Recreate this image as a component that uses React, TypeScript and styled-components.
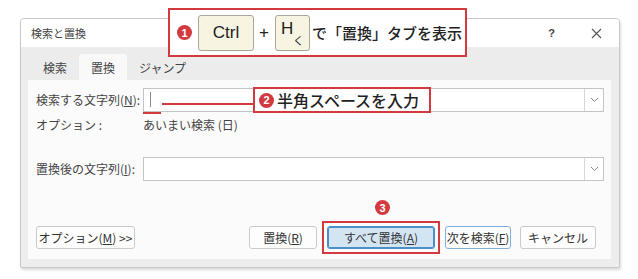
import styled, { createGlobalStyle } from 'styled-components';

const GlobalStyle = createGlobalStyle`
  html, body {
    margin: 0;
    padding: 0;
    background: #ffffff;
  }
  body {
    font-family: 'Noto Sans CJK JP', 'Noto Sans', sans-serif;
    color: #333333;
  }
`;

const Chevron = () => (
  <svg width="9" height="6" viewBox="0 0 9 6">
    <path d="M1 1 L4.5 4.5 L8 1" fill="none" stroke="#8a8a8a" strokeWidth="1" />
  </svg>
);

const CloseIcon = () => (
  <svg width="11" height="11" viewBox="0 0 11 11">
    <path d="M1 1 L10 10 M10 1 L1 10" stroke="#555" strokeWidth="1.1" />
  </svg>
);

const App = () => {
  return (
    <Page>
      <GlobalStyle />
      <Dialog>
        <TitleBar>
          <Title>検索と置換</Title>
          <TitleActions>
            <HelpMark>?</HelpMark>
            <CloseIcon />
          </TitleActions>
        </TitleBar>
        <TabStrip>
          <Tab>検索</Tab>
          <Tab active>置換</Tab>
          <Tab>ジャンプ</Tab>
        </TabStrip>
        <Panel>
          <FieldRow>
            <Label>
              検索する文字列(<u>N</u>):
            </Label>
            <Combo>
              <ComboText>
                <Caret />
                <CaretMark />
              </ComboText>
              <ComboButton>
                <Chevron />
              </ComboButton>
            </Combo>
          </FieldRow>
          <OptionRow>
            <Label>オプション :</Label>
            <span>あいまい検索 (日)</span>
          </OptionRow>
          <FieldRow>
            <Label>
              置換後の文字列(<u>I</u>):
            </Label>
            <Combo>
              <ComboText />
              <ComboButton>
                <Chevron />
              </ComboButton>
            </Combo>
          </FieldRow>
          <ButtonRow>
            <Button width={99}>
              オプション(<u>M</u>) &gt;&gt;
            </Button>
            <Spacer />
            <Button width={68}>
              置換(<u>R</u>)
            </Button>
            <Highlight>
              <StepNumber small>3</StepNumber>
              <Button width={108} variant="primary">
                すべて置換(<u>A</u>)
              </Button>
            </Highlight>
            <Button width={66} variant="focus">
              次を検索(<u>F</u>)
            </Button>
            <Button width={76}>キャンセル</Button>
          </ButtonRow>
        </Panel>
      </Dialog>

      <KeyCallout>
        <StepNumber>1</StepNumber>
        <Key width={56}>Ctrl</Key>
        <Plus>+</Plus>
        <Key width={35} align="flex-start">
          H<KeySub>く</KeySub>
        </Key>
        <CalloutText>で「置換」タブを表示</CalloutText>
      </KeyCallout>

      <SpaceCallout>
        <StepNumber>2</StepNumber>
        <CalloutText size={16}>半角スペースを入力</CalloutText>
      </SpaceCallout>
    </Page>
  );
};

const Page = styled.div`
  position: relative;
  width: 638px;
  height: 279px;
  padding: 18px 0 0 20px;
  box-sizing: border-box;
`;

const Dialog = styled.div`
  width: 600px;
  height: 250px;
  box-sizing: border-box;
  border: 1px solid #c9c9c9;
  border-radius: 4px 4px 2px 2px;
  background: #ededed;
  box-shadow: 1px 2px 3px rgba(0, 0, 0, 0.15);
  display: flex;
  flex-direction: column;
  overflow: hidden;
`;

const TitleBar = styled.div`
  height: 28px;
  background: #ffffff;
  display: flex;
  align-items: center;
  justify-content: space-between;
  padding: 0 17px 0 10px;
`;

const Title = styled.span`
  font-size: 11px;
  color: #444;
`;

const TitleActions = styled.div`
  display: flex;
  align-items: center;
  gap: 36px;
`;

const HelpMark = styled.span`
  font-family: 'Liberation Sans', sans-serif;
  font-size: 11px;
  font-weight: bold;
  color: #444;
`;

const TabStrip = styled.div`
  height: 33px;
  display: flex;
  align-items: flex-end;
  padding-left: 10px;
  background: #ececec;
`;

const Tab = styled.div<{ active?: boolean }>`
  height: 26px;
  padding: 0 12px;
  display: flex;
  align-items: center;
  font-size: 12px;
  color: #444;
  background: ${({ active }) => (active ? '#f9f9f9' : 'transparent')};
  border-radius: 3px 3px 0 0;
`;

const Panel = styled.div`
  flex: 1;
  margin: 0 8px 8px 7px;
  background: #fbfbfb;
  padding: 8px 7px 10px 8px;
  display: flex;
  flex-direction: column;
  font-size: 12px;
`;

const FieldRow = styled.div`
  display: flex;
  align-items: center;
  height: 23px;
`;

const OptionRow = styled.div`
  display: flex;
  align-items: center;
  height: 26px;
  margin-bottom: 20px;
  color: #444;
`;

const Label = styled.span`
  width: 107px;
  flex-shrink: 0;
  color: #444;
  white-space: nowrap;
`;

const Combo = styled.div`
  flex: 1;
  height: 22px;
  display: flex;
  border: 1px solid #c4c4c4;
  background: #ffffff;
`;

const ComboText = styled.div`
  position: relative;
  flex: 1;
`;

const Caret = styled.div`
  position: absolute;
  left: 6px;
  top: 3px;
  width: 1px;
  height: 15px;
  background: #888;
`;

const CaretMark = styled.div`
  position: absolute;
  left: -1px;
  bottom: -3px;
  width: 18px;
  height: 2px;
  background: #d23a3f;
  &::after {
    content: '';
    position: absolute;
    left: 19px;
    top: -9px;
    width: 92px;
    height: 2px;
    background: #d23a3f;
  }
`;

const ComboButton = styled.div`
  width: 18px;
  display: flex;
  align-items: center;
  justify-content: center;
  border-left: 1px solid #d8d8d8;
`;

const ButtonRow = styled.div`
  margin-top: auto;
  display: flex;
  align-items: center;
  gap: 9px;
  padding-right: 8px;
`;

const Spacer = styled.div`
  flex: 1;
`;

const Button = styled.div<{ width: number; variant?: 'primary' | 'focus' }>`
  width: ${({ width }) => width}px;
  height: 23px;
  box-sizing: border-box;
  display: flex;
  align-items: center;
  justify-content: center;
  font-size: 12px;
  color: #333;
  white-space: nowrap;
  border-radius: 3px;
  border: 1px solid
    ${({ variant }) =>
      variant === 'primary' ? '#4a8fc8' : variant === 'focus' ? '#7fb0d9' : '#cacaca'};
  background: ${({ variant }) => (variant === 'primary' ? '#d3e5f3' : '#fdfdfd')};
  box-shadow: ${({ variant }) => (variant === 'primary' ? 'inset 0 0 0 1px #4a8fc8' : 'none')};
`;

const Highlight = styled.div`
  position: relative;
  display: flex;
  outline: 2px solid #d23a3f;
  outline-offset: 3px;
  margin: 0 1px;
`;

const StepNumber = styled.span<{ small?: boolean }>`
  width: 15px;
  height: 15px;
  border-radius: 50%;
  background: #d23a3f;
  color: #ffffff;
  font-family: 'Liberation Sans', sans-serif;
  font-weight: bold;
  font-size: 11px;
  display: flex;
  align-items: center;
  justify-content: center;
  flex-shrink: 0;
  ${({ small }) =>
    small &&
    `
    position: absolute;
    left: 48px;
    top: -26px;
  `}
`;

const KeyCallout = styled.div`
  position: absolute;
  left: 168px;
  top: 8px;
  width: 299px;
  height: 49px;
  box-sizing: border-box;
  border: 2px solid #d23a3f;
  background: #ffffff;
  display: flex;
  align-items: center;
  padding-left: 7px;
`;

const Key = styled.div<{ width: number; align?: string }>`
  position: relative;
  width: ${({ width }) => width}px;
  height: 36px;
  flex-shrink: 0;
  box-sizing: border-box;
  margin-left: 6px;
  border: 1px solid #a9a69a;
  border-radius: 3px;
  background: #f8f4e2;
  display: flex;
  align-items: center;
  justify-content: ${({ align }) => align || 'center'};
  padding: ${({ align }) => (align ? '0 0 8px 5px' : '0')};
  font-family: 'Liberation Sans', sans-serif;
  font-size: 17px;
  color: #222;
`;

const KeySub = styled.span`
  position: absolute;
  right: 5px;
  bottom: 2px;
  font-family: 'Noto Sans CJK JP', sans-serif;
  font-size: 11px;
`;

const Plus = styled.span`
  margin-left: 5px;
  font-family: 'Liberation Sans', sans-serif;
  font-size: 17px;
  color: #222;
`;

const CalloutText = styled.span<{ size?: number }>`
  font-size: ${({ size }) => size || 15}px;
  font-weight: 500;
  color: #222;
  margin-left: ${({ size }) => (size ? 3 : 2)}px;
  white-space: nowrap;
`;

const SpaceCallout = styled.div`
  position: absolute;
  left: 253px;
  top: 87px;
  width: 178px;
  height: 26px;
  box-sizing: border-box;
  border: 2px solid #d23a3f;
  background: #ffffff;
  display: flex;
  align-items: center;
  padding-left: 4px;
`;

export default App;
